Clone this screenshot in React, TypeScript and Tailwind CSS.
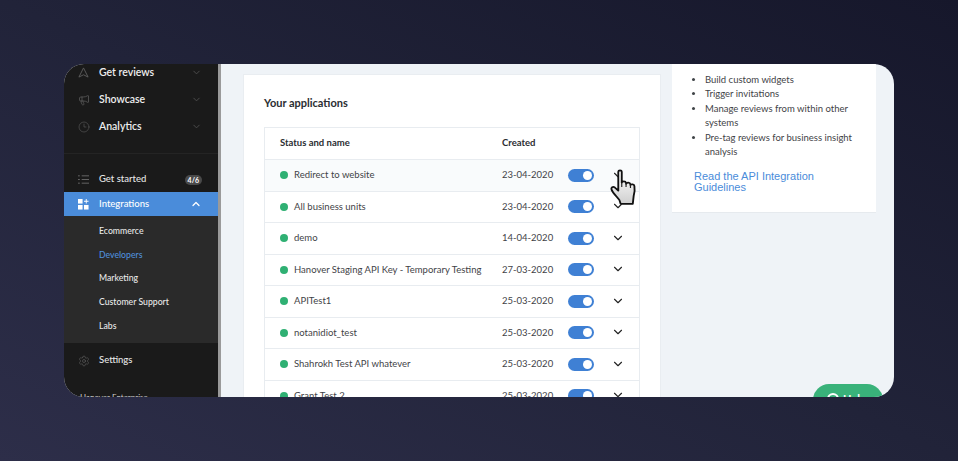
import { ChevronDown, ChevronUp, Megaphone, Clock3, Settings } from "lucide-react";

const rows: [string, string][] = [
  ["Redirect to website", "23-04-2020"],
  ["All business units", "23-04-2020"],
  ["demo", "14-04-2020"],
  ["Hanover Staging API Key - Temporary Testing", "27-03-2020"],
  ["APITest1", "25-03-2020"],
  ["notanidiot_test", "25-03-2020"],
  ["Shahrokh Test API whatever", "25-03-2020"],
  ["Grant Test 2", "25-03-2020"],
];

function Hand() {
  return (
    <svg viewBox="0 0 25 36" preserveAspectRatio="none" className="absolute left-[-2px] top-[1px] w-[29px] h-[38px]">
      <defs>
        <linearGradient id="h" x1="0" y1="0" x2="0" y2="1">
          <stop offset="0" stopColor="#ffffff" />
          <stop offset="1" stopColor="#cfcfcf" />
        </linearGradient>
      </defs>
      <path
        d="M8 2.5c0-1.6 3-1.6 3 0V13c.3-1.8 3.4-1.8 3.6 0l.2 1c.4-1.6 3.3-1.5 3.6.4l.1.9c.6-1.4 3.2-1 3.4.8.4 3 .2 6.4-.6 9.2L20.5 33H10l-1-3.5C7 26.5 3.5 23 2.2 19.5c-.7-1.9 1.2-3.2 2.8-2L8 20.5V2.5z"
        fill="url(#h)"
        stroke="#111"
        strokeWidth="1.6"
        strokeLinejoin="round"
      />
      <path d="M11 13v4M14.7 14v3M18.5 15v3" stroke="#222" strokeWidth="1" fill="none" />
    </svg>
  );
}

function Row({ name, date, first }: { name: string; date: string; first?: boolean }) {
  return (
    <div className={`flex items-center h-[31.5px] shrink-0 border-b border-[#e8ecf0] ${first ? "bg-[#f9fbfc]" : "bg-white"}`}>
      <span className="w-[8px] h-[8px] rounded-full bg-[#2fb073] ml-[15px] mr-[6px] shrink-0" />
      <span className="w-[208px] shrink-0 text-[9.5px] text-[#3f4347]">{name}</span>
      <span className="w-[66px] shrink-0 text-[9.5px] text-[#3f4347]">{date}</span>
      <span className="w-[26px] h-[13px] rounded-full bg-[#3f80d4] flex items-center justify-end pr-[2px] shrink-0">
        <span className="w-[9px] h-[9px] rounded-full bg-white" />
      </span>
      <span className="relative ml-[17px] w-[12px] h-[12px] shrink-0 -mt-[3px]">
        <ChevronDown size={14} strokeWidth={1.9} className="text-[#222]" />
        {first && <Hand />}
      </span>
    </div>
  );
}

function NavItem({ label, icon }: { label: string; icon: React.ReactNode }) {
  return (
    <div className="flex items-center h-[27px] pl-[14px] pr-[16px]">
      <span className="w-[21px] flex justify-start text-[#5e5e5e]">{icon}</span>
      <span className="text-[10.5px] font-semibold text-[#eeeeee]">{label}</span>
      <ChevronDown size={11} strokeWidth={2} className="ml-auto text-[#4f4f4f]" />
    </div>
  );
}

export default function App() {
  return (
    <div
      className="w-[958px] h-[461px] pl-[64px] pt-[64px] overflow-hidden bg-gradient-to-tr from-[#2d2e49] via-[#212339] to-[#16172b]"
      style={{ fontFamily: "Lato, sans-serif" }}
    >
      <div className="w-[830px] h-[333px] rounded-[20px] overflow-hidden flex bg-[#eff3f7]">
        <aside className="w-[154px] shrink-0 bg-[#1a1a1a] flex flex-col overflow-hidden">
          <div className="-mt-[5px] shrink-0 border-b border-[#242424] pb-[13px]">
            <NavItem
              label="Get reviews"
              icon={
                <svg viewBox="0 0 12 12" className="w-[11px] h-[11px]" fill="none" stroke="currentColor" strokeWidth="1">
                  <path d="M6 1 11 11 6 8.5 1 11z" />
                </svg>
              }
            />
            <NavItem label="Showcase" icon={<Megaphone size={12} strokeWidth={1.5} />} />
            <NavItem label="Analytics" icon={<Clock3 size={12} strokeWidth={1.2} />} />
          </div>
          <div className="flex items-center h-[38px] pt-[13px] pl-[14px] pr-[16px] shrink-0">
            <span className="w-[21px] text-[#6a6a6a]">
              <svg viewBox="0 0 12 12" className="w-[11px] h-[11px]" stroke="currentColor" strokeWidth="1">
                <path d="M0 2h2M4 2h8M0 6h2M4 6h8M0 10h2M4 10h8" />
              </svg>
            </span>
            <span className="text-[9.5px] font-medium text-[#e6e6e6]">Get started</span>
            <span className="ml-auto rounded-full bg-[#4a4a4a] text-white text-[7px] font-bold leading-[10px] px-[3px]">4/6</span>
          </div>
          <div className="flex items-center h-[24px] pl-[14px] pr-[16px] shrink-0 bg-[#4a8cda]">
            <span className="w-[21px]">
              <svg viewBox="0 0 12 12" className="w-[11px] h-[11px]" fill="#fff">
                <rect x="0" y="0" width="5" height="5" />
                <rect x="0" y="6.5" width="5" height="5" />
                <rect x="6.5" y="6.5" width="5" height="5" />
                <path d="M8.5 0h1v2h2v1h-2v2h-1V3h-2V2h2z" />
              </svg>
            </span>
            <span className="text-[9.5px] font-medium text-white">Integrations</span>
            <ChevronUp size={12} strokeWidth={2.5} className="ml-auto text-white" />
          </div>
          <div className="shrink-0 h-[127px] bg-[#2a2a2a] pl-[35px] pt-[3px] flex flex-col text-[8.7px] font-medium text-[#e8e8e8]">
            <span className="h-[23.6px] flex items-center">Ecommerce</span>
            <span className="h-[23.6px] flex items-center text-[#4f8fdc]">Developers</span>
            <span className="h-[23.6px] flex items-center">Marketing</span>
            <span className="h-[23.6px] flex items-center">Customer Support</span>
            <span className="h-[23.6px] flex items-center">Labs</span>
          </div>
          <div className="flex items-center h-[35px] pl-[14px] shrink-0">
            <span className="w-[21px] text-[#5e5e5e]">
              <Settings size={12} strokeWidth={1.3} />
            </span>
            <span className="text-[9.5px] font-medium text-[#e6e6e6]">Settings</span>
          </div>
          <div className="mt-[14px] pl-[16px] text-[8px] text-[#cfcfcf] whitespace-nowrap leading-[10px]">Hanover Enterprise</div>
        </aside>
        <div className="w-[3px] shrink-0 bg-[#9a9a9a]" />
        <main className="flex-1 flex items-start pl-[22px] pt-[10px] gap-[11px] relative overflow-hidden">
          <section className="w-[418px] h-[340px] shrink-0 bg-white border border-[#e9edf1] px-[20px] pt-[22px]">
            <h2 className="text-[11px] font-bold text-[#2a2d31] leading-[14px] -mt-[1px]">Your applications</h2>
            <div className="mt-[17px] border border-[#e8ecf0] w-[376px] h-[300px] overflow-hidden">
              <div className="flex items-center h-[32px] border-b border-[#e8ecf0] text-[9.5px] font-bold text-[#2a2d31]">
                <span className="ml-[15px] w-[222px]">Status and name</span>
                <span>Created</span>
              </div>
              {rows.map(([n, d], i) => (
                <Row key={n} name={n} date={d} first={i === 0} />
              ))}
            </div>
          </section>
          <section className="w-[204px] h-[149px] -mt-[10px] shrink-0 bg-white border-b border-[#e6eaee] pl-[33px] pr-[16px] pt-[9px]">
            <ul className="list-disc text-[9.5px] leading-[14.4px] text-[#3f4347]">
              <li>Build custom widgets</li>
              <li>Trigger invitations</li>
              <li>Manage reviews from within other systems</li>
              <li>Pre-tag reviews for business insight analysis</li>
            </ul>
            <a
              className="block -ml-[11px] mt-[12px] text-[11px] leading-[10.5px] text-[#4a8cda]"
              style={{ fontFamily: '"Liberation Sans", sans-serif' }}
            >
              Read the API Integration Guidelines
            </a>
          </section>
          <div className="absolute right-[11px] bottom-[-19px] w-[70px] h-[32px] rounded-full bg-[#39b27a] flex items-start pl-[14px] pt-[9px] gap-[4px] text-white text-[11px] font-bold">
            <span className="w-[12px] h-[12px] rounded-full border-2 border-white" />
            <span className="leading-[12px]">Help</span>
          </div>
        </main>
      </div>
    </div>
  );
}
